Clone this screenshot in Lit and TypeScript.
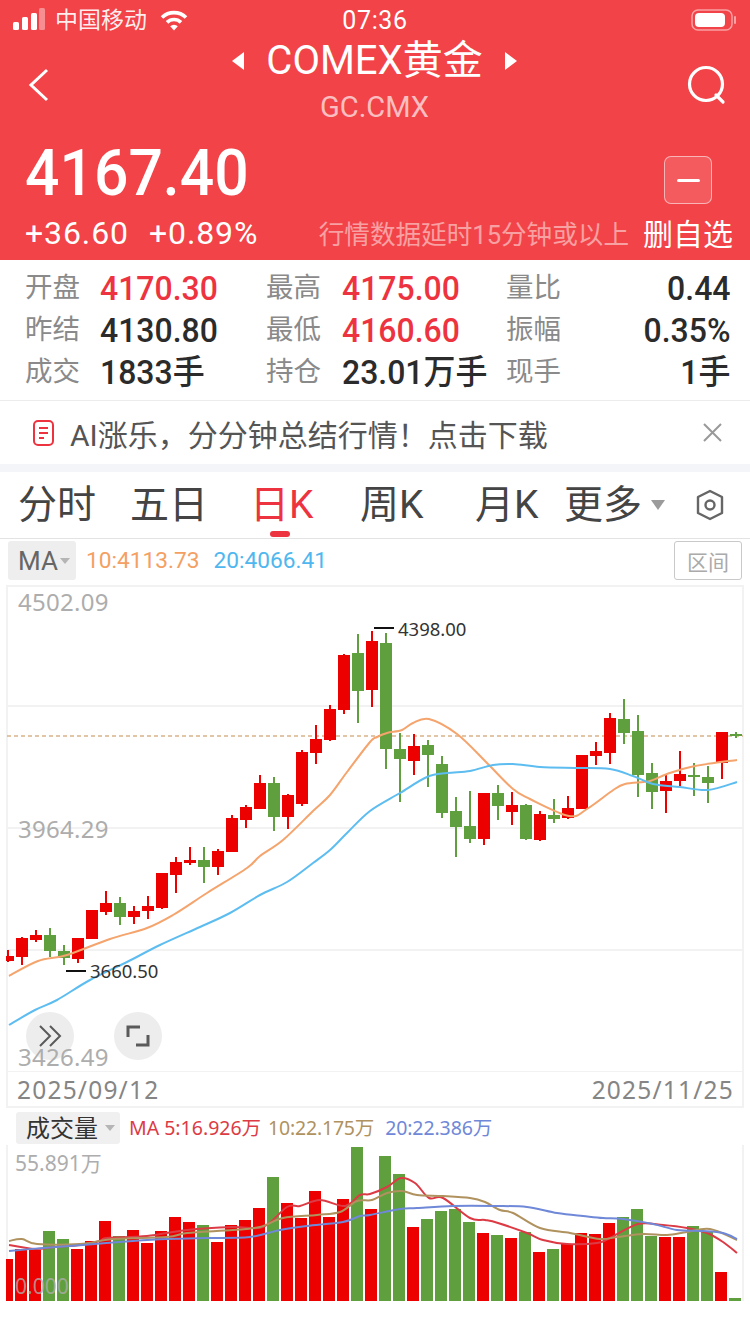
import { LitElement, html, css, svg } from "lit";
import { customElement } from "lit/decorators.js";

const RED = "#ec0000";
const GREEN = "#5f9f3e";
// [bodyTop, bodyBottom, wickTop, wickBottom, isRed]
const candles: [number, number, number, number, number][] = [
  [956,961,950,962,1],[938,957,937,965,1],[935,940,930,942,1],[935,951,928,957,0],[951,958,945,965,0],
  [938,959,938,963,1],[910,939,910,939,1],[903,912,891,915,1],[903,917,897,925,0],[911,917,906,924,1],
  [906,911,896,919,1],[873,908,873,909,1],[862,875,857,893,1],[860,863,847,865,1],[860,867,847,883,0],
  [851,867,849,875,1],[818,852,815,852,1],[807,820,805,828,1],[783,809,775,809,1],[783,817,777,831,0],
  [795,817,794,829,1],[752,804,750,806,1],[739,753,725,764,1],[709,740,705,741,1],[655,710,654,714,1],
  [653,691,634,723,0],[641,690,631,707,1],[643,749,633,769,0],[749,759,733,802,0],[746,761,734,775,1],
  [745,755,740,787,0],[764,813,756,818,0],[811,827,797,857,0],[826,839,791,843,0],[793,839,793,845,1],
  [793,806,785,820,0],[805,812,792,825,1],[805,839,804,840,0],[814,840,811,841,1],[815,819,799,823,0],
  [808,818,796,819,1],[755,809,755,809,1],[751,756,742,765,1],[718,753,713,764,1],[719,733,699,744,0],
  [731,775,715,797,0],[773,792,763,809,0],[781,791,775,813,1],[774,781,751,786,1],[775,777,763,796,0],
  [777,783,766,803,0],[732,763,732,779,1],[734,736,732,738,0],
];
const ma10 = "9,976 38,961 67,955 110,939 147,928 173,915 207,893 247,868 260,856 283,840 313,811 330,795 347,772 370,742 377,737 387,733 402,730 413,723 429,719 457,734 487,763 513,789 530,799 569,816 587,809 612,791 625,784 650,781 667,774 695,766 737,760";
const ma20 = "9,1025 35,1010 57,1000 90,980 127,962 160,945 200,927 230,913 260,895 287,882 313,863 330,850 347,833 370,811 400,793 427,777 447,773 470,771 493,765 513,764 540,767 577,768 610,769 633,776 653,784 680,787 708,790 737,782";
// [top, isRed]
const vols: [number, number][] = [
  [1259,1],[1249,1],[1250,1],[1231,0],[1239,0],[1249,1],[1241,1],[1221,1],[1236,0],[1230,1],
  [1243,1],[1231,1],[1217,1],[1222,1],[1225,0],[1242,1],[1225,1],[1220,1],[1208,1],[1177,0],
  [1203,1],[1218,1],[1191,1],[1217,1],[1199,1],[1147,0],[1209,1],[1156,0],[1174,0],[1227,1],
  [1219,0],[1211,0],[1209,0],[1222,0],[1233,1],[1235,0],[1238,1],[1232,0],[1252,1],[1249,0],
  [1244,1],[1233,1],[1234,1],[1223,1],[1217,0],[1209,0],[1236,0],[1237,1],[1237,1],[1226,0],
  [1232,0],[1272,1],[1298,0],
];
const v5 = "9,1245 35,1249 55,1247 80,1245 100,1241 107,1238 147,1236 187,1230 233,1227 263,1227 287,1207 300,1206 320,1200 345,1206 360,1195 370,1194 387,1187 401,1178 415,1183 429,1198 443,1198 470,1218 485,1220 498,1223 527,1233 543,1240 567,1244 597,1243 610,1238 638,1224 663,1225 687,1228 707,1233 723,1242 737,1253";
const v10 = "9,1241 22,1239 37,1244 80,1244 113,1239 167,1237 187,1233 233,1230 260,1227 283,1218 317,1215 340,1212 357,1201 372,1200 387,1193 402,1191 417,1195 443,1196 470,1198 485,1202 500,1210 513,1213 540,1228 570,1233 600,1239 617,1237 643,1234 667,1235 687,1232 710,1229 737,1240";
const v20 = "9,1251 43,1248 83,1245 133,1241 167,1239 207,1238 250,1237 280,1230 307,1226 343,1222 360,1216 370,1215 400,1209 417,1208 453,1206 493,1206 527,1207 557,1213 583,1216 603,1218 623,1219 653,1224 677,1230 703,1231 723,1233 737,1239";

/** Catmull-Rom smoothing of a "x,y x,y ..." list into a cubic path. */
function smooth(list: string): string {
  const p = list.split(" ").map((s) => s.split(",").map(Number));
  let d = `M${p[0][0]} ${p[0][1]}`;
  for (let i = 0; i < p.length - 1; i++) {
    const a = p[Math.max(i - 1, 0)], b = p[i], c = p[i + 1], e = p[Math.min(i + 2, p.length - 1)];
    const k = 1 / 6;
    d += `C${(b[0] + (c[0] - a[0]) * k).toFixed(1)} ${(b[1] + (c[1] - a[1]) * k).toFixed(1)} ${(c[0] - (e[0] - b[0]) * k).toFixed(1)} ${(c[1] - (e[1] - b[1]) * k).toFixed(1)} ${c[0]} ${c[1]}`;
  }
  return d;
}

@customElement("app-root")
export class AppRoot extends LitElement {
  static styles = css`
    :host { display: block; width: 750px; height: 1334px; background: #fff; overflow: hidden;
      font-family: Roboto, "Noto Sans CJK SC", sans-serif; color: #333; }
    * { box-sizing: border-box; }
    svg { display: block; }

    .header { height: 260px; background: #f24348; color: #fff; display: flex; flex-direction: column; }
    .status { height: 40px; display: grid; grid-template-columns: 1fr auto 1fr; align-items: center; padding: 2px 13px 0; }
    .status-left { display: flex; align-items: center; gap: 10px; font-size: 23px; line-height: 38px; color: rgba(255,255,255,.92); }
    .signal { margin-top: -4px; }
    .wifi { margin: -2px 0 0 3px; }
    .status-right { display: flex; justify-content: flex-end; margin-top: -3px; }
    .time { font-size: 25px; line-height: 38px; letter-spacing: .6px; }
    .nav { height: 90px; display: flex; justify-content: space-between; align-items: center; padding: 0 23px 0 28px; }
    .title-col { align-self: flex-start; display: flex; flex-direction: column; align-items: center; margin-left: 12px; }
    .title-row { display: flex; align-items: center; gap: 22px; height: 40px; margin-top: 1px; }
    .title { font-size: 40px; line-height: 40px; }
    .code { font-size: 29px; line-height: 34px; margin-top: 9px; color: rgba(255,255,255,.68); }
    .main { flex: 1; display: flex; justify-content: space-between; padding: 0 17px 0 25px; }
    .price { font-size: 64.5px; line-height: 60px; font-weight: 500; margin-top: 13px; transform: scaleX(.94); transform-origin: left; }
    .change { display: flex; gap: 20px; font-size: 32px; line-height: 40px; margin-top: 10px; letter-spacing: .9px; }
    .right { display: flex; flex-direction: column; align-items: flex-end; padding-top: 26px; }
    .minus { width: 48px; height: 48px; margin-right: 21px; border-radius: 7px; border: 1px solid rgba(255,255,255,.55);
      background: rgba(255,255,255,.13); display: flex; align-items: center; justify-content: center; }
    .minus i { display: block; width: 23px; height: 3px; background: #fff; border-radius: 2px; }
    .delay-row { display: flex; align-items: center; gap: 14px; margin-top: 8px; height: 40px; }
    .delay { font-size: 25.6px; color: rgba(255,255,255,.5); white-space: nowrap; }
    .del { font-size: 30px; }

    .quote { height: 141px; padding: 7px 20px 0 25px; border-bottom: 1px solid #ececec;
      display: grid; grid-template-columns: 75px 166px 76px 164px 1fr auto; grid-auto-rows: 42px; align-items: center; }
    .lbl { font-size: 27.5px; color: #8a8a8a; line-height: 42px; }
    .val { font-size: 34px; font-weight: 500; color: #2b2b2b; white-space: nowrap; line-height: 42px;
      transform: scaleX(.94); transform-origin: left; }
    .val.up { color: #ee3340; }
    .val.end { text-align: right; transform-origin: right; }

    .banner { height: 63px; display: flex; align-items: center; padding: 0 28px 0 33px; background: #fff; }
    .banner-text { font-size: 30px; margin-left: 16px; flex: 1; color: #555; white-space: nowrap; }
    .band { height: 8px; background: #f3f5f8; }

    .tabs { height: 67px; padding-left: 18px; border-bottom: 1px solid #e3e3e3; display: grid;
      grid-template-columns: 112px 120px 110px 115px 89px 87px 45px 28px; align-items: center; }
    .tab { font-size: 39px; line-height: 66px; color: #444; position: relative; white-space: nowrap; }
    .tab.on { color: #ee3340; }
    .tab.on::after { content: ""; position: absolute; left: 20px; top: 59px; width: 20px; height: 6px; border-radius: 3px; background: #ee3340; }
    .caret { width: 0; height: 0; border-style: solid; border-color: #9b9b9b transparent transparent; }
    .caret.big { border-width: 10px 7.5px 0; }
    .caret.sm { border-width: 6px 5px 0; border-top-color: #b5b5b5; }

    .ma { height: 46px; padding: 2px 8px 0; display: flex; align-items: flex-start; }
    .chip { display: flex; align-items: center; background: #eee; border-radius: 3px; }
    .ma-chip { width: 68px; height: 39px; padding-left: 10px; gap: 2px; font-size: 26px; color: #666; }
    .ma-val { font-size: 22.7px; line-height: 39px; }
    .o { color: #f4a063; margin-left: 10px; }
    .b { color: #4fb7ef; margin-left: 14px; }
    .range { margin-left: auto; width: 68px; height: 39px; border: 1px solid #c9c9c9; border-radius: 3px; font-size: 21px;
      color: #aaa; display: flex; align-items: center; justify-content: center; }

    .chart-text { font-family: "Noto Sans", sans-serif; }
    .axis { font-size: 24px; fill: #adadad; letter-spacing: .3px; }
    .tip { font-size: 18.5px; fill: #333; }

    .dates { height: 36px; margin: 0 6px; padding: 0 8px 0 9px; border-left: 2px solid #f2f2f2; border-right: 2px solid #f2f2f2;
      border-bottom: 2px solid #f2f2f2; display: flex; justify-content: space-between; align-items: center;
      font-family: "Noto Sans", sans-serif; font-size: 24.5px; letter-spacing: 1.2px; color: #858585; }

    .vol-legend { height: 37px; padding: 4px 0 0 16px; display: flex; align-items: flex-start; font-size: 19.5px; line-height: 32px; font-family: "Noto Sans", "Noto Sans CJK SC", sans-serif; white-space: nowrap; }
    .vol-chip { width: 104px; height: 32px; padding-left: 10px; gap: 7px; font-size: 24px; color: #333; background: #f0f0f0; }
    .m5 { color: #dc3b45; margin-left: 9px; }
    .m10 { color: #b0925f; margin-left: 7px; letter-spacing: -.2px; }
    .m20 { color: #6f88d8; margin-left: 11px; letter-spacing: -.1px; }
    .vol-svg-text { font-size: 21px; fill: #adadad; font-family: "Noto Sans", "Noto Sans CJK SC", sans-serif; }
  `;

  private mainChart() {
    return html`<svg width="750" height="487" viewBox="0 585 750 487">
      <g fill="none" stroke="#f2f2f2" stroke-width="2">
        <path d="M7 585V1072M743 585V1072"/>
        <path d="M6 586H744M6 706H744M6 828H744M6 950H744M6 1072H744"/>
      </g>
      <line x1="7" x2="743" y1="736" y2="736" stroke="#d9b389" stroke-width="1.5" stroke-dasharray="4 3"/>
      ${candles.map(([bt, bb, wt, wb, up], i) => {
        const cx = 8 + 14 * i;
        const color = up ? RED : GREEN;
        const left = Math.max(cx - 6, 6);
        return svg`<rect x=${cx - 1} y=${wt} width="2" height=${wb - wt} fill=${color}/>
          <rect x=${left} y=${bt} width=${cx + 6 - left} height=${bb - bt} fill=${color}/>`;
      })}
      <path d=${smooth(ma10)} fill="none" stroke="#f4a46c" stroke-width="2"/>
      <path d=${smooth(ma20)} fill="none" stroke="#5dbdf0" stroke-width="2"/>
      <g class="chart-text">
        <rect x="66" y="970" width="20" height="2" fill="#111"/>
        <text class="tip" x="90" y="978">3660.50</text>
        <rect x="374" y="627" width="20" height="2" fill="#111"/>
        <text class="tip" x="398" y="636">4398.00</text>
        <text class="axis" x="18" y="611">4502.09</text>
        <text class="axis" x="18" y="838">3964.29</text>
      </g>
      <circle cx="50" cy="1036" r="24" fill="#ededed"/>
      <path d="M40 1026l10 10-10 10M50 1026l10 10-10 10" fill="none" stroke="#5a5a5a" stroke-width="2"/>
      <circle cx="138" cy="1036" r="24" fill="#ededed"/>
      <path d="M128 1037v-10h12M148 1035v10h-12" fill="none" stroke="#5a5a5a" stroke-width="3"/>
      <text class="axis chart-text" x="18" y="1066">3426.49</text>
    </svg>`;
  }

  private volChart() {
    return html`<svg width="750" height="189" viewBox="0 1145 750 189">
      <path d="M7 1145V1301M743 1145V1301" stroke="#f2f2f2" stroke-width="2"/>
      ${vols.map(([top, up], i) => {
        const cx = 7 + 14 * i;
        const left = Math.max(cx - 6, 6);
        return svg`<rect x=${left} y=${top} width=${cx + 6 - left} height=${1301 - top} fill=${up ? RED : GREEN}/>`;
      })}
      <path d=${smooth(v5)} fill="none" stroke="#dc3b45" stroke-width="2"/>
      <path d=${smooth(v10)} fill="none" stroke="#b0925f" stroke-width="2"/>
      <path d=${smooth(v20)} fill="none" stroke="#6f88d8" stroke-width="2"/>
      <text class="vol-svg-text" x="15" y="1171">55.891万</text>
      <text class="vol-svg-text" x="15" y="1294" fill-opacity=".8">0.000</text>
    </svg>`;
  }

  render() {
    return html`
      <div class="header">
        <div class="status">
          <div class="status-left">
            <svg class="signal" width="32" height="22" viewBox="0 0 32 22">
              <rect x="0" y="14" width="6" height="8" rx="1.5" fill="#fff"/>
              <rect x="9" y="9" width="6" height="13" rx="1.5" fill="#fff"/>
              <rect x="18" y="5" width="6" height="17" rx="1.5" fill="#fff"/>
              <rect x="26" y="0" width="6" height="22" rx="1.5" fill="#fff" fill-opacity=".4"/>
            </svg>
            <span>中国移动</span>
            <svg class="wifi" width="28" height="22" viewBox="0 0 28 22" fill="none" stroke="#fff" stroke-width="3.6">
              <path d="M2 8.6a17 17 0 0 1 24 0M7 13.4a10 10 0 0 1 14 0"/>
              <path d="M10.2 17.2a5.4 5.4 0 0 1 7.6 0L14 21.6z" fill="#fff" stroke="none"/>
            </svg>
          </div>
          <span class="time">07:36</span>
          <div class="status-right">
            <svg width="46" height="22" viewBox="0 0 46 22">
              <rect x="1" y="1" width="40" height="20" rx="6" fill="none" stroke="#fff" stroke-opacity=".5" stroke-width="1.5"/>
              <rect x="4" y="4" width="30" height="14" rx="4" fill="#fff"/>
              <rect x="43" y="7" width="2" height="8" rx="1" fill="#fff" fill-opacity=".5"/>
            </svg>
          </div>
        </div>
        <div class="nav">
          <svg width="22" height="34" viewBox="0 0 22 34" fill="none" stroke="#fff" stroke-width="3">
            <path d="M19 2L3 17l16 15"/>
          </svg>
          <div class="title-col">
            <div class="title-row">
              <svg width="12" height="18" viewBox="0 0 12 18"><path d="M12 0v18L0 9z" fill="#fff"/></svg>
              <span class="title">COMEX黄金</span>
              <svg width="12" height="18" viewBox="0 0 12 18"><path d="M0 0v18l12-9z" fill="#fff"/></svg>
            </div>
            <div class="code">GC.CMX</div>
          </div>
          <svg width="40" height="40" viewBox="0 0 40 40" fill="none" stroke="#fff" stroke-width="3.2">
            <circle cx="19" cy="19" r="16.5"/>
            <path d="M29 30l7 7" stroke-linecap="round"/>
          </svg>
        </div>
        <div class="main">
          <div>
            <div class="price">4167.40</div>
            <div class="change"><span>+36.60</span><span>+0.89%</span></div>
          </div>
          <div class="right">
            <div class="minus"><i></i></div>
            <div class="delay-row">
              <span class="delay">行情数据延时15分钟或以上</span>
              <span class="del">删自选</span>
            </div>
          </div>
        </div>
      </div>

      <div class="quote">
        <span class="lbl">开盘</span><span class="val up">4170.30</span>
        <span class="lbl">最高</span><span class="val up">4175.00</span>
        <span class="lbl">量比</span><span class="val end">0.44</span>
        <span class="lbl">昨结</span><span class="val">4130.80</span>
        <span class="lbl">最低</span><span class="val up">4160.60</span>
        <span class="lbl">振幅</span><span class="val end">0.35%</span>
        <span class="lbl">成交</span><span class="val">1833手</span>
        <span class="lbl">持仓</span><span class="val">23.01万手</span>
        <span class="lbl">现手</span><span class="val end">1手</span>
      </div>

      <div class="banner">
        <svg width="21" height="26" viewBox="0 0 21 26" fill="none" stroke="#ee3340" stroke-width="2">
          <rect x="1" y="1" width="19" height="24" rx="4"/>
          <path d="M6 8h9M6 13h9M6 18h5"/>
        </svg>
        <span class="banner-text">AI涨乐，分分钟总结行情！点击下载</span>
        <svg width="19" height="19" viewBox="0 0 19 19" stroke="#999" stroke-width="2">
          <path d="M1 1l17 17M18 1L1 18"/>
        </svg>
      </div>
      <div class="band"></div>

      <div class="tabs">
        <span class="tab">分时</span>
        <span class="tab">五日</span>
        <span class="tab on">日K</span>
        <span class="tab">周K</span>
        <span class="tab">月K</span>
        <span class="tab">更多</span>
        <span class="caret big"></span>
        <svg width="28" height="32" viewBox="0 0 28 32" fill="none" stroke="#666" stroke-width="2.4">
          <path d="M14 2l12 6v16l-12 6-12-6V8z" stroke-linejoin="round"/>
          <circle cx="14" cy="16" r="4.5"/>
        </svg>
      </div>

      <div class="ma">
        <div class="chip ma-chip"><span>MA</span><span class="caret sm"></span></div>
        <span class="ma-val o">10:4113.73</span>
        <span class="ma-val b">20:4066.41</span>
        <div class="range">区间</div>
      </div>

      ${this.mainChart()}
      <div class="dates"><span>2025/09/12</span><span>2025/11/25</span></div>

      <div class="vol-legend">
        <div class="chip vol-chip"><span>成交量</span><span class="caret sm"></span></div>
        <span class="m5">MA 5:16.926万</span>
        <span class="m10">10:22.175万</span>
        <span class="m20">20:22.386万</span>
      </div>
      ${this.volChart()}
    `;
  }
}
